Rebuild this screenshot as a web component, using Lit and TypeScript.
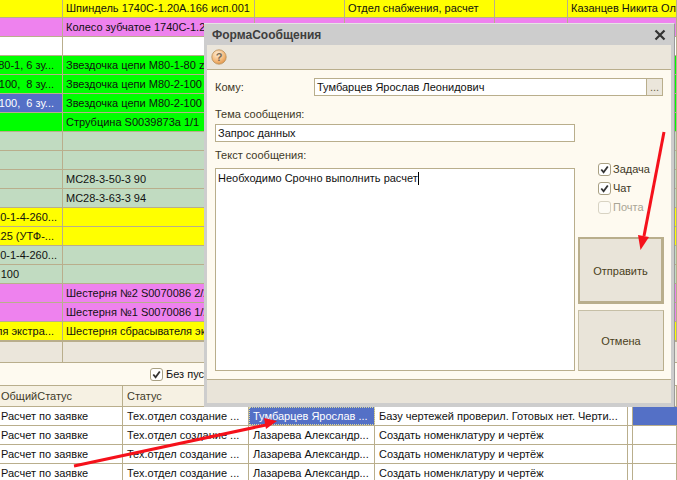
import { LitElement, html, css, svg } from "lit";
import { customElement } from "lit/decorators.js";

type Row = { bg: string; a?: string; aEnd?: number; b?: string; d?: string; f?: string; sel?: boolean };

const Y = "yellow", P = "pink", G = "green", S = "sage", W = "white";
const rows: Row[] = [
  { bg: Y, b: "Шпиндель 1740С-1.20А.166 исп.001", d: "Отдел снабжения, расчет", f: "Казанцев Никита Олегович" },
  { bg: P, b: "Колесо зубчатое 1740С-1.20А.170" },
  { bg: W },
  { bg: G, a: "М80-1, 6 зу...", aEnd: 8, b: "Звездочка цепи М80-1-80 z" },
  { bg: G, a: "100,\u00a0 8 зу...", aEnd: 8, b: "Звездочка цепи М80-2-100" },
  { bg: G, sel: true, a: "100,\u00a0 6 зу...", aEnd: 8, b: "Звездочка цепи М80-2-100" },
  { bg: G, b: "Струбцина S0039873а 1/1" },
  { bg: S },
  { bg: S },
  { bg: S, b: "МС28-3-50-3 90" },
  { bg: S, b: "МС28-3-63-3 94" },
  { bg: Y, a: "100-1-4-260...", aEnd: 5 },
  { bg: Y, a: "125 (УТФ-...", aEnd: 8 },
  { bg: S, a: "100-1-4-260...", aEnd: 5 },
  { bg: S, a: "100", aEnd: 43 },
  { bg: P, b: "Шестерня №2 S0070086 2/2" },
  { bg: P, b: "Шестерня №1 S0070086 1/2" },
  { bg: Y, a: "ля экстра...", aEnd: 8, b: "Шестерня сбрасывателя экстрактора" },
];

const lower = [
  { c: "Тумбарцев Ярослав ...", d: "Базу чертежей проверил. Готовых нет. Черти...", active: true },
  { c: "Лазарева Александр...", d: "Создать номенклатуру и чертёж" },
  { c: "Лазарева Александр...", d: "Создать номенклатуру и чертёж" },
  { c: "Лазарева Александр...", d: "Создать номенклатуру и чертёж" },
];

const check = svg`<svg class="tick" viewBox="0 0 12 12"><path d="M2.5 6 L5 9 L9.6 2.8" fill="none" stroke="#333" stroke-width="2"/></svg>`;

@customElement("app-root")
export class AppRoot extends LitElement {
  static styles = css`
    :host { display: block; position: relative; width: 677px; height: 480px; overflow: hidden;
      font: 11px/1 "Liberation Sans", Arial, sans-serif; color: #111; background: #fefaf0; }
    .tr { display: grid; grid-template-columns: 63px 192px 90px 150px 73px 109px; height: 19px;
      box-sizing: border-box; border-bottom: 1px solid #b9ae8c; }
    .tr:first-child { height: 18px; }
    .tr:nth-child(18) { height: 20px; border-bottom-width: 2px; }
    .td { border-right: 1px solid #b9ae8c; white-space: nowrap; overflow: hidden; display: flex; align-items: center;
      padding-left: 3px; min-width: 0; }
    .td.left { justify-content: flex-end; padding-left: 0; overflow: hidden; }
    .yellow { background: #ffff00; } .pink { background: #ee82ee; } .green { background: #00ff00; }
    .sage { background: #c1dbc1; } .white { background: #fff; }
    .blue { background: #5470c6; color: #fff; }
    .empty { height: 21px; background: #ebe6db; border-bottom: 1px solid #b9ae8c;
      display: grid; grid-template-columns: 63px 1fr; box-sizing: border-box; }
    .empty div:first-child { border-right: 1px solid #b9ae8c; }
    .panel { height: 23px; background: #fefaf0; border-bottom: 1px solid #b9ae8c; display: flex; align-items: center;
      box-sizing: border-box; padding-left: 150px; gap: 3px; }
    .box { width: 11px; height: 11px; border: 1px solid #a9a083; border-radius: 3px; background: #fff; flex: none; display: block; }
    .box.off { border-color: #d8d3c3; background: #fdfbf5; }
    .tick { display: block; width: 11px; height: 11px; }
    .lines { display: grid; grid-template-columns: 123px 126px 126px 253px 5px 44px; }
    .head { height: 21px; background: #f6f1e3; border-bottom: 1px solid #b9ae8c; box-sizing: border-box; }
    .head .th { border-right: 1px solid #b9ae8c; display: flex; align-items: center; padding-left: 1px; color: #3f3a28; }
    .head .th + .th { padding-left: 4px; }
    .ln { height: 19px; box-sizing: border-box; border-bottom: 1px solid #b9ae8c; background: #fff; }
    .ln > div { border-right: 1px solid #b9ae8c; display: flex; align-items: center; padding-left: 1px; white-space: nowrap; overflow: hidden; min-width: 0; }
    .ln > div + div { padding-left: 4px; }
    .ln.active { background: #5470c6; }
    .ln.active > div { background: #fff; }
    .ln.active > .cur { background: #5470c6; color: #fff; outline: 1px dotted #d8d8a0; outline-offset: -1px; }
    .ln.active > .rest { background: #5470c6; border-right: none; }

    .dialog { position: absolute; left: 204px; top: 23px; width: 471px; height: 384px; box-sizing: border-box;
      background: #cdcdcd; border-top: 1px solid #e4e4e4; border-right: 1px solid #9a9a9a; padding: 0 3px 4px 3px;
      display: flex; flex-direction: column; }
    .title { height: 21px; flex: none; display: flex; justify-content: space-between; align-items: center;
      padding: 0 5px 0 5px; font-weight: bold; font-size: 12px; color: #3e3e3e; }
    .close { width: 12px; height: 12px; display: block; }
    .tools { height: 25px; flex: none; background: #ebe6db; border-bottom: 1px solid #b9ae8c; box-sizing: border-box;
      display: flex; align-items: center; padding-left: 4px; }
    .help { width: 16px; height: 16px; display: block; }
    .body { flex: 1; background: #fefaf0; padding: 8px; display: flex; flex-direction: column; min-height: 0; color: #3d3826; }
    .to { display: flex; height: 18px; align-items: center; flex: none; }
    .to label { width: 99px; }
    .field { background: #fff; border: 1px solid #b9ae8c; box-sizing: border-box; color: #111; padding-left: 2px;
      display: flex; align-items: center; height: 18px; white-space: nowrap; }
    .to .field { flex: 1; }
    .pick { width: 16px; height: 18px; box-sizing: border-box; background: #ebe6db; border: 1px solid #b9ae8c; border-left: none;
      text-align: center; color: #6b6448; line-height: 16px; font-size: 11px; flex: none; }
    .cols { flex: 1; display: grid; grid-template-columns: 360px 86px; column-gap: 3px; min-height: 0; padding-top: 10px; }
    .leftcol { display: flex; flex-direction: column; min-height: 0; }
    .lbl { height: 18px; padding-bottom: 2px; box-sizing: border-box; display: flex; align-items: center; flex: none; }
    .lbl2 { height: 26px; box-sizing: border-box; display: flex; align-items: center; flex: none; }
    .area { flex: 1; background: #fff; border: 1px solid #b9ae8c; padding: 3px 2px; color: #111; box-sizing: border-box; line-height: 13px; }
    .caret { display: inline-block; width: 1px; height: 13px; background: #000; vertical-align: bottom; }
    .rightcol { display: flex; flex-direction: column; }
    .checks { display: flex; flex-direction: column; gap: 6px; padding: 57px 0 0 20px; height: 131px; box-sizing: border-box; flex: none; }
    .chk { display: flex; align-items: center; gap: 2px; height: 13px; }
    .chk.off { color: #a9a595; }
    .btn { background: #e9e4d9; display: flex; align-items: center; justify-content: center; box-sizing: border-box;
      color: #4a3f20; padding-top: 2px; }
    .send { height: 67px; flex: none; border: 2px solid #b9ae8c; border-right-width: 3px; border-bottom-width: 3px; }
    .cancel { flex: 1; margin-top: 6px; border: 1px solid #c6bfa6; border-right-color: #b9ae8c; border-bottom-color: #b9ae8c; }
    .foot { height: 24px; flex: none; background: #e9e4d9; border-top: 1px solid #b9ae8c; box-sizing: border-box; }
    .arrows { position: absolute; left: 0; top: 0; width: 677px; height: 480px; pointer-events: none; }
  `;

  render() {
    return html`
      ${rows.map((r) => html`
        <div class="tr ${r.bg}">
          <div class="td left ${r.sel ? "blue" : ""}" style="padding-right:${r.aEnd ?? 0}px">${r.a ?? ""}</div>
          <div class="td">${r.b ?? ""}</div>
          <div class="td"></div>
          <div class="td">${r.d ?? ""}</div>
          <div class="td"></div>
          <div class="td">${r.f ?? ""}</div>
        </div>`)}
      <div class="empty"><div></div><div></div></div>
      <div class="panel"><span class="box">${check}</span><span>Без пустых</span></div>
      <div class="lines head">
        <div class="th">ОбщийСтатус</div><div class="th">Статус</div><div class="th"></div><div class="th"></div><div class="th"></div><div class="th"></div>
      </div>
      ${lower.map((l) => html`
        <div class="lines ln ${l.active ? "active" : ""}">
          <div>Расчет по заявке</div>
          <div>Тех.отдел создание ...</div>
          <div class="cur">${l.c}</div>
          <div>${l.d}</div>
          <div></div>
          <div class="rest"></div>
        </div>`)}

      <div class="dialog">
        <div class="title">
          <span>ФормаСообщения</span>
          <svg class="close" viewBox="0 0 12 12"><path d="M1.5 1.5 L10.5 10.5 M10.5 1.5 L1.5 10.5" stroke="#333" stroke-width="2.2" fill="none"/></svg>
        </div>
        <div class="tools">
          <svg class="help" viewBox="0 0 16 16">
            <defs><radialGradient id="h" cx="0.4" cy="0.3" r="0.8"><stop offset="0" stop-color="#fdeed8"/><stop offset="0.6" stop-color="#f4b878"/><stop offset="1" stop-color="#d98a3a"/></radialGradient></defs>
            <circle cx="8" cy="8" r="7.2" fill="url(#h)" stroke="#b9905a" stroke-width="0.8"/>
            <text x="8" y="12" text-anchor="middle" font-family="Liberation Sans" font-size="11" font-weight="bold" fill="#7a6a55">?</text>
          </svg>
        </div>
        <div class="body">
          <div class="to">
            <label>Кому:</label>
            <div class="field">Тумбарцев Ярослав Леонидович</div>
            <div class="pick">...</div>
          </div>
          <div class="cols">
            <div class="leftcol">
              <div class="lbl">Тема сообщения:</div>
              <div class="field">Запрос данных</div>
              <div class="lbl2">Текст сообщения:</div>
              <div class="area">Необходимо Срочно выполнить расчет<span class="caret"></span></div>
            </div>
            <div class="rightcol">
              <div class="checks">
                <div class="chk"><span class="box">${check}</span>Задача</div>
                <div class="chk"><span class="box">${check}</span>Чат</div>
                <div class="chk off"><span class="box off"></span>Почта</div>
              </div>
              <div class="btn send">Отправить</div>
              <div class="btn cancel">Отмена</div>
            </div>
          </div>
        </div>
        <div class="foot"></div>
      </div>

      <svg class="arrows" viewBox="0 0 677 480">
        <path d="M74 466 L266 425" stroke="#f5111b" stroke-width="3" fill="none"/>
        <path d="M277 421 L264 418 L266 429 Z" fill="#f5111b"/>
        <path d="M664 132 L644 236" stroke="#f5111b" stroke-width="3" fill="none"/>
        <path d="M640.5 250 L638 235 L649 237 Z" fill="#f5111b"/>
      </svg>
    `;
  }
}
